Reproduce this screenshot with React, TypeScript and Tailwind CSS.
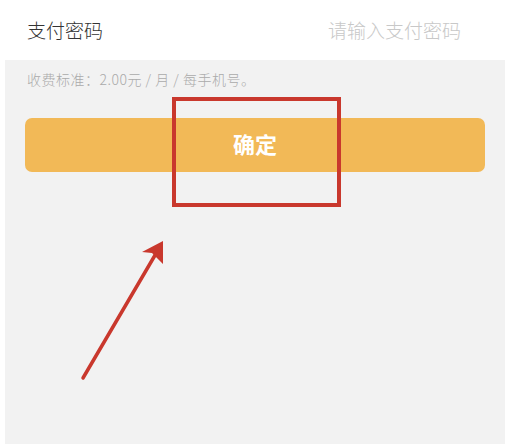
const font = { fontFamily: '"Noto Sans CJK SC", "Noto Sans", sans-serif' };

const App = () => {
    return (
        <div className="relative w-[505px] h-[444px] bg-white overflow-hidden" style={font}>
            {/* password row */}
            <div className="flex h-[60px] items-center justify-between pl-[27px] pr-[44px]">
                <div className="text-[19px] font-light text-[#333333]">支付密码</div>
                <input
                    className="w-[140px] text-right text-[19px] font-light text-[#333333] placeholder:text-[#c8c8c8] outline-none bg-transparent"
                    placeholder="请输入支付密码"
                    type="password"
                />
            </div>

            {/* fee note + confirm */}
            <div className="ml-[5px] h-[384px] bg-[#f2f2f2] pt-[10px]">
                <div className="pl-[22px] text-[14px] leading-[18px] tracking-[0.5px] font-light text-[#aaaaaa]">收费标准：2.00元 / 月 / 每手机号。</div>
                <div className="px-[20px] pt-[30px]">
                    <button className="flex h-[54px] w-full items-center justify-center rounded-[7px] bg-[#f2b957] pb-[3px] text-[22px] font-bold text-white">
                        确定
                    </button>
                </div>
            </div>

            {/* annotation box over the button */}
            <div className="absolute left-[172px] top-[97px] h-[110px] w-[169px] border-[4px] border-[#c9382d]" />

            {/* annotation arrow */}
            <svg className="absolute left-0 top-0" width="505" height="444" viewBox="0 0 505 444">
                <line x1="83" y1="378" x2="161" y2="245" stroke="#c9382d" strokeWidth="3.5" strokeLinecap="round" />
                <path d="M163 241 L142 252 L152 253 L163 264 Z" fill="#c9382d" />
            </svg>
        </div>
    );
};

export default App;
